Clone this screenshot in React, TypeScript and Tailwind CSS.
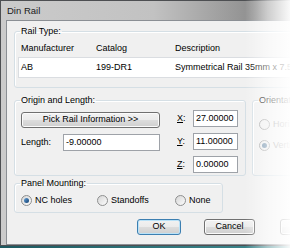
import type { ReactNode } from 'react'

function Group({ title, className, children }: { title: string; className?: string; children?: ReactNode }) {
  return (
    <fieldset className={`shrink-0 rounded-[3px] border border-[#d5dfe5] pl-[5px] shadow-[inset_1px_1px_0_#fff] ${className ?? ''}`}>
      <legend className="px-[1px] leading-[11px]">{title}</legend>
      {children}
    </fieldset>
  )
}

function Radio({ checked, disabled, label }: { checked?: boolean; disabled?: boolean; label: string }) {
  return (
    <div className={`flex items-center gap-[3px] ${disabled ? 'text-[#8f8f8f]' : ''}`}>
      <span
        className={`flex h-[11px] w-[11px] items-center justify-center rounded-full border ${
          disabled
            ? 'border-[#a5a5a5] bg-[#eeeeee]'
            : 'border-[#8e8f8f] bg-gradient-to-br from-[#d6d6d6] to-[#fcfcfc]'
        }`}
      >
        {checked && (
          <span
            className={`h-[5px] w-[5px] rounded-full ${
              disabled ? 'bg-[#6f8ea9]' : 'bg-gradient-to-br from-[#63a0d8] to-[#10406f]'
            }`}
          />
        )}
      </span>
      <span>{label}</span>
    </div>
  )
}

function TextBox({ value, className }: { value: string; className?: string }) {
  return (
    <div className={`h-[17px] border border-[#9ea2a8] bg-white pl-[2px] leading-[15px] ${className ?? ''}`}>{value}</div>
  )
}

function Button({ label, focused, className }: { label: string; focused?: boolean; className?: string }) {
  return (
    <div
      className={`flex h-[16px] items-center justify-center rounded-[3px] border bg-[linear-gradient(#f2f2f2,#ebebeb_50%,#dddddd_50%,#cfcfcf)] ${
        focused
          ? 'border-[#3c7fb1] shadow-[inset_0_0_0_1px_#b9e2f8]'
          : 'border-[#707070] shadow-[inset_0_0_0_1px_#fbfbfb]'
      } ${className ?? ''}`}
    >
      {label}
    </div>
  )
}

export default function App() {
  return (
    <div className="relative h-[248px] w-[290px] overflow-hidden bg-[linear-gradient(to_right,#1d5960,#3f8b91)] font-['Liberation_Sans',Arial,sans-serif] text-[9px] text-black">
      {/* Window */}
      <div className="flex h-[246px] w-[340px] flex-col border-l border-t border-b border-[#4d4f52] bg-[linear-gradient(to_right,#cbcbcb,#c2c2c2_45%,#8e8e8e_75%,#9a9a9a)] pl-[5px]">
        {/* Title bar */}
        <div className="flex h-[19px] items-center pl-[1px] text-[9.5px] leading-none text-[#1a1a1a]">Din Rail</div>

        {/* Client area */}
        <div className="flex flex-1 flex-col border border-[#8b8f94] bg-[#f0f0f0] pl-[7px] pt-[5px]">
          <Group title="Rail Type:" className="h-[62px] w-[320px]">
            <div className="flex pl-[1px] pt-[6px] leading-[11px]">
              <span className="w-[75px]">Manufacturer</span>
              <span className="w-[79px]">Catalog</span>
              <span>Description</span>
            </div>
            <div className="-ml-[2px] mt-[3px] flex h-[21px] items-center border border-[#dadde1] bg-white pl-[2px]">
              <span className="w-[75px]">AB</span>
              <span className="w-[79px]">199-DR1</span>
              <span className="whitespace-nowrap">Symmetrical Rail 35mm x 7.5mm</span>
            </div>
          </Group>

          <div className="mt-[7px] flex gap-[6px]">
            <Group title="Origin and Length:" className="h-[81px] w-[232px]">
              <div className="flex items-start pl-[1px]">
                <div className="flex w-[139px] flex-col pt-[6px]">
                  <Button label="Pick Rail Information >>" />
                  <div className="mt-[6px] flex items-center">
                    <span className="w-[42px]">Length:</span>
                    <TextBox value="-9.00000" className="flex-1" />
                  </div>
                </div>
                <div className="ml-[17px] flex flex-col gap-[6px] pt-[4px]">
                  {[
                    ['X', '27.00000'],
                    ['Y', '11.00000'],
                    ['Z', '0.00000'],
                  ].map(([k, v]) => (
                    <div key={k} className="flex items-center">
                      <span className="w-[16px]">
                        <span className="underline">{k}</span>:
                      </span>
                      <TextBox value={v} className="w-[45px]" />
                    </div>
                  ))}
                </div>
              </div>
            </Group>
            <Group title="Orientation" className="h-[81px] w-[90px]">
              <div className="flex flex-col gap-[7px] pl-[1px] pt-[12px]">
                <Radio disabled label="Horizontal" />
                <Radio disabled checked label="Vertical" />
              </div>
            </Group>
          </div>

          <Group title="Panel Mounting:" className="mt-[2px] h-[35px] w-[209px]">
            <div className="flex pl-[1px] pt-[5px]">
              <div className="w-[76px]">
                <Radio checked label="NC holes" />
              </div>
              <div className="w-[78px]">
                <Radio label="Standoffs" />
              </div>
              <Radio label="None" />
            </div>
          </Group>

          <div className="mt-[6px] flex pl-[123px]">
            <Button label="OK" focused className="w-[44px]" />
            <Button label="Cancel" className="ml-[23px] w-[51px]" />
            <Button label="Help" className="ml-[25px] w-[51px]" />
          </div>
        </div>
      </div>

      {/* right-hand fade of the screenshot */}
      <div className="pointer-events-none absolute inset-y-0 right-0 w-[45px] bg-[linear-gradient(to_right,rgba(255,255,255,0),rgba(255,255,255,0.55)_50%,rgba(255,255,255,0.95))]" />
    </div>
  )
}
